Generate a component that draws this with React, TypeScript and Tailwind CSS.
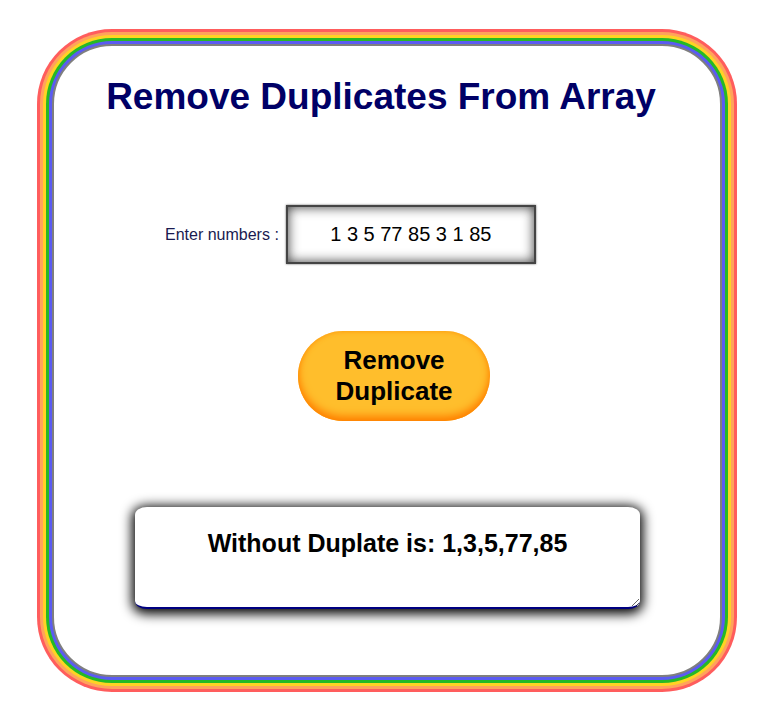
import React, { useState } from 'react';

const App: React.FC = () => {
  const [numbers, setNumbers] = useState('1 3 5 77 85 3 1 85');
  const [result, setResult] = useState('Without Duplate is: 1,3,5,77,85');

  const removeDuplicate = () => {
    const list = numbers.split(' ').filter(n => n !== '');
    const unique = list.filter((n, i) => list.indexOf(n) === i);
    setResult('Without Duplate is: ' + unique.join(','));
  };

  return (
    <div className="min-h-[717px] bg-white pt-[44px] pl-[52px] font-['Liberation_Sans',Arial,sans-serif]">
      {/* rainbow card */}
      <div className="w-[670px] h-[633px] rounded-[60px] border-2 border-[#7f7f7f] bg-white flex flex-col shadow-[0_0_0_3px_#5b5bf2,0_0_0_6px_#25b925,0_0_0_9px_#ffd324,0_0_0_12px_#ffa35c,0_0_0_15px_#ff5d5d]">
        <h1 className="mt-[31px] pr-[12px] text-center text-[37px] leading-[40px] font-bold text-[#000066]">
          Remove Duplicates From Array
        </h1>

        <div className="mt-[88px] ml-[111px] flex items-center gap-[7px]">
          <label className="text-[16px] leading-[18px] text-[#1a1a50]">Enter numbers :</label>
          <input
            className="w-[250px] h-[59px] border-2 border-[#444] bg-white text-center text-[20px] text-black outline-none shadow-[inset_0_0_12px_#3a3a3a,0_0_2px_#666]"
            value={numbers}
            onChange={e => setNumbers(e.target.value)}
          />
        </div>

        <button
          onClick={removeDuplicate}
          className="mt-[67px] ml-[244px] w-[192px] h-[90px] rounded-full bg-[#ffbe2c] text-[26px] leading-[31px] font-bold text-black shadow-[inset_0_-5px_9px_#ff8000,inset_0_0_5px_#ff9f10]"
        >
          Remove
          <br />
          Duplicate
        </button>

        <textarea
          readOnly
          value={result}
          className="mt-[86px] ml-[81px] w-[505px] h-[102px] rounded-[12px/8px] border-0 border-b-2 border-[#000080] bg-white pt-[22px] text-center text-[25px] leading-[29px] font-bold text-black outline-none shadow-[0_2px_12px_3px_#000]"
        />
      </div>
    </div>
  );
};

export default App;
